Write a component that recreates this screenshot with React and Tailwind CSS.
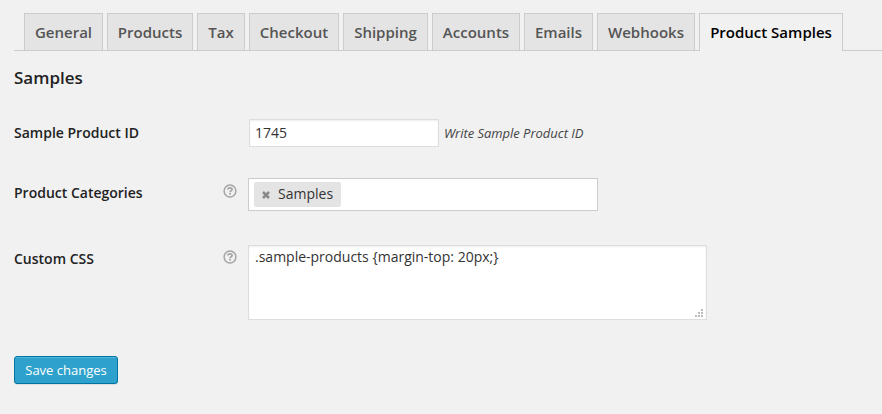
import React from "react";

const tabs = [
  { label: "General", width: "w-[79px]" },
  { label: "Products", width: "w-[86px]" },
  { label: "Tax", width: "w-[48px]" },
  { label: "Checkout", width: "w-[90px]" },
  { label: "Shipping", width: "w-[85px]" },
  { label: "Accounts", width: "w-[88px]" },
  { label: "Emails", width: "w-[69px]" },
  { label: "Webhooks", width: "w-[98px]" },
  { label: "Product Samples", width: "w-[144px]", active: true },
];

function Tab({ label, width, active }) {
  return (
    <a
      className={`flex shrink-0 justify-center whitespace-nowrap border border-b-0 border-[#ccc] pt-[6px] text-[15px] leading-6 font-semibold ${width} ${
        active ? "-mb-px h-[38px] bg-[#f1f1f1] text-black" : "h-[37px] bg-[#e4e4e4] text-[#555]"
      }`}
    >
      {label}
    </a>
  );
}

function HelpIcon() {
  return (
    <svg className="size-[14px]" viewBox="0 0 14 14" fill="none" stroke="#a6a6a6">
      <circle cx="7" cy="7" r="5.9" strokeWidth="1.5" />
      <path d="M4.9 5.6C4.9 4.4 5.8 3.8 7 3.8S9.1 4.5 9.1 5.5C9.1 6.7 7.1 6.7 7.1 8.2" strokeWidth="1.7" />
      <path d="M7.1 9v1.6" strokeWidth="1.8" />
    </svg>
  );
}

function ResizeGrip() {
  return (
    <svg className="absolute right-[4px] bottom-[3px] h-2 w-2" viewBox="0 0 8 8" fill="#bbb" shapeRendering="crispEdges">
      <path d="M6 0h2v2H6zM3 3h2v2H3zM6 3h2v2H6zM0 6h2v2H0zM3 6h2v2H3zM6 6h2v2H6z" />
    </svg>
  );
}

export default function App() {
  return (
    <div className="h-[414px] w-[882px] overflow-hidden bg-[#f1f1f1] pt-[13px] pl-[14px] font-['Open_Sans','Noto_Sans',sans-serif] text-sm text-[#333]">
      <nav className="flex h-[38px] gap-1 border-b border-[#ccc] pl-[10px]">
        {tabs.map((tab) => (
          <Tab key={tab.label} {...tab} />
        ))}
      </nav>

      <h3 className="mt-[15px] h-6 text-[17px] leading-6 font-semibold text-[#222]">Samples</h3>

      <div className="mt-[29px] flex h-[28px] items-center">
        <label className="w-[235px] font-semibold text-[#222]">Sample Product ID</label>
        <input
          defaultValue="1745"
          className="h-[28px] w-[190px] border border-[#ddd] bg-white px-[5px] pb-px text-sm text-[#333] shadow-[inset_0_1px_2px_rgba(0,0,0,0.07)] outline-none"
        />
        <span className="ml-[5px] text-[13px] tracking-[-0.03px] text-[#444] italic">Write Sample Product ID</span>
      </div>

      <div className="mt-[31px] flex h-[33px]">
        <label className="w-[209px] pt-[5px] font-semibold text-[#222]">Product Categories</label>
        <div className="w-[25px] pt-[6px]">
          <HelpIcon />
        </div>
        <div className="h-[33px] w-[350px] border border-[#ccc] bg-white pt-[3px] pl-[5px]">
          <div className="flex h-[25px] w-[87px] items-center rounded-[2px] bg-[#e4e4e4] pl-2">
            <svg className="mt-px h-2 w-2" viewBox="0 0 8 8" stroke="#888" strokeWidth="2.5">
              <path d="M1 1l6 6M7 1L1 7" />
            </svg>
            <span className="mb-[2px] ml-2 text-sm leading-[23px]">Samples</span>
          </div>
        </div>
      </div>

      <div className="mt-[34px] flex h-[75px]">
        <label className="w-[209px] pt-[4px] font-semibold text-[#222]">Custom CSS</label>
        <div className="w-[25px] pt-[5px]">
          <HelpIcon />
        </div>
        <div className="relative h-[75px] w-[459px]">
          <textarea
            defaultValue=".sample-products {margin-top: 20px;}"
            className="block h-full w-full resize-none border border-[#ddd] bg-white px-[6px] py-px text-sm leading-5 text-[#333] shadow-[inset_0_1px_2px_rgba(0,0,0,0.07)] outline-none"
          />
          <ResizeGrip />
        </div>
      </div>

      <button className="mt-[36px] flex h-[28px] w-[104px] items-center justify-center rounded-[3px] border border-[#0074a2] bg-[#2ea2cc] text-[13px] whitespace-nowrap text-white shadow-[inset_0_1px_0_rgba(120,200,230,0.5),0_1px_0_rgba(0,0,0,0.08)]">
        Save changes
      </button>
    </div>
  );
}
